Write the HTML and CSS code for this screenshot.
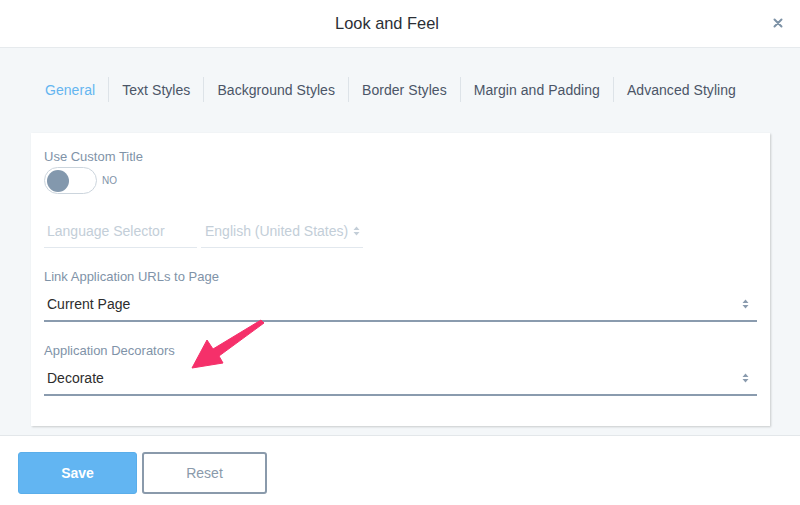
FILE: index.html
```html
<!DOCTYPE html>
<html>
<head>
<meta charset="utf-8">
<link rel="stylesheet" href="styles.css">
</head>
<body>
<div class="modal">
  <header class="header">
    <h1 class="title">Look and Feel</h1>
    <svg class="close" width="10" height="10" viewBox="0 0 10 10"><path d="M1.5 1.5L8.5 8.5M8.5 1.5L1.5 8.5" stroke="#7d92a6" stroke-width="2" stroke-linecap="round"/></svg>
  </header>
  <main class="body">
    <nav class="tabs">
      <span class="tab active">General</span>
      <span class="tab">Text Styles</span>
      <span class="tab">Background Styles</span>
      <span class="tab">Border Styles</span>
      <span class="tab">Margin and Padding</span>
      <span class="tab">Advanced Styling</span>
    </nav>
    <section class="card">
      <div class="label">Use Custom Title</div>
      <div class="toggle-row">
        <span class="toggle"><span class="knob"></span></span>
        <span class="toggle-text">NO</span>
      </div>
      <div class="lang-row">
        <div class="lang-input">Language Selector</div>
        <div class="lang-select">English (United States)
          <svg width="7" height="10" viewBox="0 0 7 10"><path d="M3.5 0.5L6.5 4H0.5Z M3.5 9.5L6.5 6H0.5Z" fill="#c3ced8"/></svg>
        </div>
      </div>
      <div class="label gap">Link Application URLs to Page</div>
      <div class="select"><span>Current Page</span>
        <svg width="7" height="10" viewBox="0 0 7 10"><path d="M3.5 0.5L6.5 4H0.5Z M3.5 9.5L6.5 6H0.5Z" fill="#8a9bae"/></svg>
      </div>
      <div class="label gap">Application Decorators</div>
      <div class="select"><span>Decorate</span>
        <svg width="7" height="10" viewBox="0 0 7 10"><path d="M3.5 0.5L6.5 4H0.5Z M3.5 9.5L6.5 6H0.5Z" fill="#8a9bae"/></svg>
      </div>
    </section>
  </main>
  <footer class="footer">
    <button class="btn save">Save</button>
    <button class="btn reset">Reset</button>
  </footer>
</div>
<svg class="annot" width="800" height="505" viewBox="0 0 800 505">
  <polygon points="192,368 207,340 213,349 261,320 264,323 219,356 223,363" fill="#f5306a" stroke="#f5306a" stroke-width="1" stroke-linejoin="round"/>
</svg>
</body>
</html>
```
FILE: styles.css
```css
* { box-sizing: border-box; }
html, body { margin: 0; padding: 0; }
body {
  width: 800px;
  height: 505px;
  overflow: hidden;
  font-family: "Liberation Sans", Arial, sans-serif;
  background: #ffffff;
  position: relative;
}
.modal { display: flex; flex-direction: column; height: 505px; }
.header {
  height: 48px;
  border-bottom: 1px solid #e6eaed;
  display: flex;
  align-items: center;
  justify-content: center;
  position: relative;
  background: #fff;
}
.title {
  margin: 0;
  font-size: 16.4px;
  font-weight: normal;
  color: #2b2f36;
  padding-right: 26px;
}
.close { position: absolute; right: 17px; top: 18px; }
.body {
  background: #f4f7f9;
  height: 388px;
  padding-top: 29px;
  border-bottom: 1px solid #e3e7ea;
}
.tabs {
  display: flex;
  padding-left: 45px;
  height: 25px;
  align-items: center;
}
.tab {
  font-size: 14px;
  letter-spacing: 0.05px;
  color: #4b5567;
  padding: 1px 13px 0 13px;
  border-left: 1px solid #dde3e8;
  height: 25px;
  line-height: 25px;
}
.tab.active { color: #64b5f0; border-left: none; padding-left: 0; }
.card {
  margin: 31px 30px 0 31px;
  background: #fff;
  height: 293px;
  padding: 16px 13px 0 13px;
  box-shadow: 1px 1px 2px rgba(0,0,0,0.18);
}
.label {
  font-size: 13px;
  line-height: 16px;
  color: #7f93a8;
}
.label.gap { margin-top: 21px; }
.toggle-row { display: flex; align-items: center; margin-top: 2px; }
.toggle {
  width: 53px;
  height: 27px;
  border: 1px solid #ccd5dd;
  border-radius: 14px;
  display: flex;
  align-items: center;
  padding-left: 2px;
}
.knob {
  width: 22px;
  height: 22px;
  border-radius: 50%;
  background: #8398ad;
}
.toggle-text { font-size: 10px; color: #7f93a8; margin-left: 5px; }
.lang-row { display: flex; gap: 4px; margin-top: 21px; }
.lang-input, .lang-select {
  height: 33px;
  border-bottom: 1px solid #e2e8ee;
  font-size: 14px;
  color: #c3ced8;
  display: flex;
  align-items: center;
  padding-left: 3px;
}
.lang-input { width: 153px; }
.lang-select { width: 162px; padding-left: 4px; gap: 5px; }
.select {
  margin-top: 2px;
  height: 35px;
  border-bottom: 2px solid #8a9bae;
  display: flex;
  align-items: center;
  justify-content: space-between;
  padding: 0 8px 0 3px;
  font-size: 14px;
  color: #2d2d2d;
}
.footer {
  padding: 16px 0 0 18px;
  display: flex;
  gap: 5px;
  background: #fff;
}
.btn {
  height: 42px;
  font-family: "Liberation Sans", Arial, sans-serif;
  font-size: 14px;
  border-radius: 3px;
}
.save {
  width: 119px;
  background: #62b5f2;
  border: 1px solid #5aaeea;
  color: #fff;
  font-weight: bold;
}
.reset {
  width: 125px;
  background: #fff;
  border: 2px solid #8a9aab;
  color: #8a9aab;
}
.annot { position: absolute; left: 0; top: 0; pointer-events: none; }
```
